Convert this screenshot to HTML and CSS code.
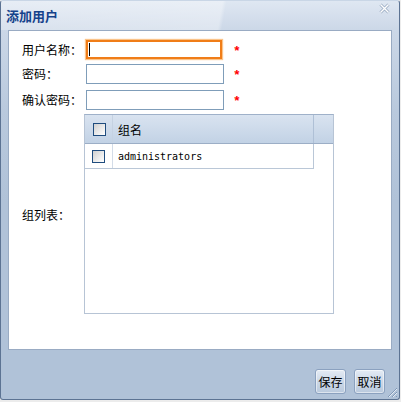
FILE: index.html
```html
<!DOCTYPE html>
<html lang="zh-CN">
<head>
    <meta charset="UTF-8">
    <title>添加用户</title>
    <link rel="stylesheet" href="styles.css">
</head>
<body>
    <div class="window">
        <div class="title-bar">
            <span class="title">添加用户</span>
            <span class="close">
                <svg width="11" height="11" viewBox="0 0 11 11">
                    <path d="M1.5 1.5 L9.5 9.5 M9.5 1.5 L1.5 9.5" stroke="#9aabc2" stroke-width="3" fill="none"/>
                    <path d="M1.5 1.5 L9.5 9.5 M9.5 1.5 L1.5 9.5" stroke="#ffffff" stroke-width="1.4" fill="none"/>
                </svg>
            </span>
        </div>

        <div class="body">
            <div class="form">
                <label class="label">用户名称：</label>
                <div class="field">
                    <span class="input-wrap focus"><input type="text" class="input"></span>
                    <span class="required">*</span>
                </div>

                <label class="label">密码：</label>
                <div class="field">
                    <span class="input-wrap"><input type="password" class="input"></span>
                    <span class="required">*</span>
                </div>

                <label class="label">确认密码：</label>
                <div class="field">
                    <span class="input-wrap"><input type="password" class="input"></span>
                    <span class="required">*</span>
                </div>

                <label class="label label-grid">组列表：</label>
                <div class="grid">
                    <div class="grid-head">
                        <div class="cell cell-check"><span class="check"></span></div>
                        <div class="cell cell-name">组名</div>
                        <div class="cell cell-fill"></div>
                    </div>
                    <div class="grid-row">
                        <div class="cell cell-check"><span class="check"></span></div>
                        <div class="cell cell-name mono">administrators</div>
                    </div>
                </div>
            </div>
        </div>

        <div class="footer">
            <button class="btn">保存</button>
            <button class="btn">取消</button>
            <span class="grip">
                <svg width="12" height="12" viewBox="0 0 12 12">
                    <path d="M11 2 L2 11 M11 6 L6 11 M11 10 L10 11" stroke="#7f98b8" stroke-width="1" fill="none"/>
                    <path d="M11 3 L3 11 M11 7 L7 11" stroke="#e4ebf4" stroke-width="1" fill="none"/>
                </svg>
            </span>
        </div>
    </div>
</body>
</html>
```

FILE: styles.css
```css
* {
    margin: 0;
    padding: 0;
    box-sizing: border-box;
}

body {
    background: #ececec;
    font-family: "Noto Sans CJK SC", "Liberation Sans", sans-serif;
    font-size: 12px;
    color: #000;
}

.window {
    width: 400px;
    height: 400px;
    display: flex;
    flex-direction: column;
    border: 1px solid #5c7393;
    border-top-color: #c9d6e6;
    border-radius: 3px;
    background: linear-gradient(#dfe7f2 0, #cbd7e7 30px, #b9c9dd 110px, #b0c2d8 200px);
}

.title-bar {
    height: 29px;
    display: flex;
    align-items: center;
    justify-content: space-between;
    padding: 0 9px 0 5px;
    background: linear-gradient(100deg, rgba(255,255,255,0.25) 0, rgba(255,255,255,0.35) 55%, rgba(255,255,255,0) 56%);
}

.title {
    font-size: 13px;
    font-weight: bold;
    color: #15428b;
    line-height: 1;
}

.close {
    display: flex;
    margin-top: -15px;
}

.body {
    margin: 0 7px;
    height: 320px;
    background: #fff;
    border: 1px solid #99abc3;
    padding: 9px 0 0 13px;
}

.form {
    display: grid;
    grid-template-columns: 62px auto;
    grid-template-rows: 24px 26px 24px auto;
    align-items: start;
}

.label {
    line-height: 19px;
    white-space: nowrap;
}

.label-grid {
    align-self: center;
}

.field {
    display: flex;
    align-items: center;
    margin-left: 2px;
}

.input-wrap {
    position: relative;
    display: block;
}

.input {
    display: block;
    width: 138px;
    height: 20px;
    border: 1px solid #7f9db9;
    outline: none;
    background: #fff;
}

.input-wrap.focus .input {
    width: 136px;
    height: 19px;
    margin-right: 2px;
    border: 2px solid #f07d18;
    box-shadow: 0 0 1px 1px #fbc48a;
}

.input-wrap.focus::after {
    content: '';
    position: absolute;
    left: 3px;
    top: 3px;
    width: 1px;
    height: 13px;
    background: #000;
}

.required {
    color: #ff0000;
    font-family: "Liberation Mono", monospace;
    font-weight: bold;
    font-size: 13px;
    margin-left: 9px;
    line-height: 1;
    padding-top: 3px;
}

.grid {
    width: 250px;
    height: 200px;
    border: 1px solid #b7c4d5;
    border-top-color: #9fb1c9;
}

.grid-head {
    display: flex;
    height: 29px;
    background: linear-gradient(#d9e3f0, #c2d2e5);
    border-bottom: 1px solid #9caec6;
}

.grid-row {
    display: flex;
    width: 229px;
    height: 25px;
    border-bottom: 1px solid #bac7d7;
    border-right: 1px solid #bac7d7;
}

.cell {
    display: flex;
    align-items: center;
}

.cell-check {
    width: 28px;
    justify-content: center;
    padding-left: 1px;
    border-right: 1px solid #c5d2e2;
}

.grid-row .cell-check {
    border-right-color: #d3dce8;
}

.cell-name {
    width: 201px;
    padding-left: 5px;
}

.grid-head .cell-name {
    border-right: 1px solid #afc0d6;
}

.cell-fill {
    flex: 1;
}

.mono {
    font-family: "DejaVu Sans Mono", "Liberation Mono", monospace;
    font-size: 10px;
}

.check {
    display: block;
    width: 13px;
    height: 13px;
    border: 1px solid #1f4c7e;
    background: linear-gradient(135deg, #d0d0d0, #f2f2f2 70%, #fff);
}

.footer {
    flex: 1;
    position: relative;
    display: flex;
    justify-content: flex-end;
    align-items: flex-start;
    gap: 8px;
    padding: 19px 14px 0 0;
}

.btn {
    width: 31px;
    height: 25px;
    border: 1px solid #8ba1bf;
    border-radius: 3px;
    background: linear-gradient(#e4ebf4, #ccd8e7 50%, #b9c9dd);
    box-shadow: inset 0 0 0 1px rgba(255,255,255,0.5);
    font-family: "Noto Sans CJK SC", sans-serif;
    font-size: 12px;
    color: #000;
}

.grip {
    position: absolute;
    right: 1px;
    bottom: 1px;
    display: flex;
}
```
